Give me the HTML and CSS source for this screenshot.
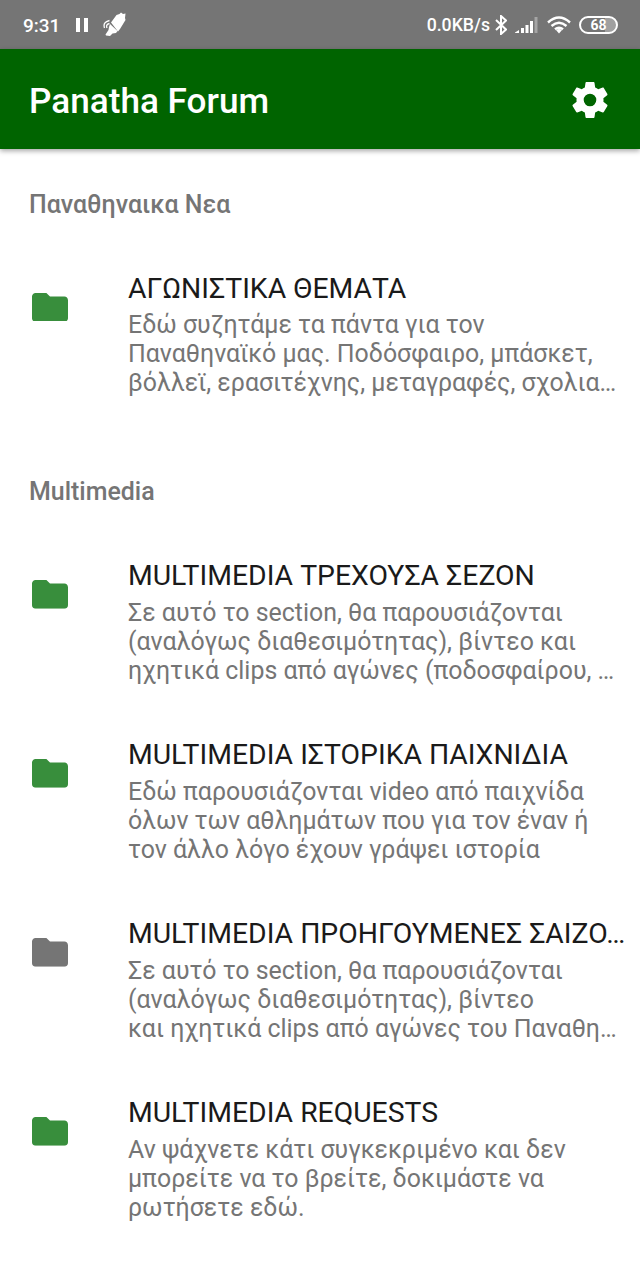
FILE: index.html
```
<!DOCTYPE html>
<html lang="el">
<head>
<meta charset="utf-8">
<title>Panatha Forum</title>
<link rel="stylesheet" href="styles.css">
</head>
<body>
<svg class="defs" aria-hidden="true"><symbol id="folder" viewBox="2 4 20 16"><path d="M10 4H4c-1.100 0-2 .9-2 2v12c0 1.100.9 2 2 2h16c1.100 0 2-.9 2-2V8c0-1.100-.9-2-2-2h-8z"/></symbol></svg>
<header class="status">
  <span class="clock">9:31</span>
  <svg class="pause" viewBox="0 0 12 14"><path d="M0 0h4v14H0zM8 0h4v14H8z"/></svg>
  <svg class="rocket" viewBox="0 0 24 26"><path d="M8 10.500L13.500 3l3-1L18 .5 20 2l2.500-.5-.5 4.500.5 2-5.500 9-2 2.500zM7 12l7.500 7-1.500 2-3.500.5L7 24l-4-.5-.5-1L5.500 18l.5-3z"/><path class="line thin" d="M1.500 16q-2-6 5-7.500M4 16q-1.500-3.500 2.500-4.500"/></svg>
  <span class="speed">0.0KB/s</span>
  <svg class="bluetooth" viewBox="0 0 12 20"><path class="line" d="M1 5l10 9.500L6 19V1l5 4.500L1 15"/></svg>
  <svg class="signal" viewBox="0 0 24 17"><path d="M0 16.500l4-2.500v3H0zM6 12h3v5H6zM10.500 9h3v8h-3zM15 5h3v12h-3z"/><path class="dim" d="M19.500 1h3v16h-3z"/></svg>
  <svg class="wifi" viewBox="0 0 24 18"><path class="line bold" d="M1 6.500Q12-3.500 23 6.500M4.500 10Q12 3.500 19.500 10M8 13.300Q12 10 16 13.300"/><path d="M9 14q3-2 6 0l-3 3.500z"/></svg>
  <span class="battery">68</span>
</header>
<div class="appbar">
  <h1 class="title">Panatha Forum</h1>
  <svg class="gear" viewBox="2 2 20 20"><path d="M19.430 12.980c.04-.32.070-.64.070-.98s-.03-.66-.07-.98l2.110-1.650c.19-.15.240-.42.120-.64l-2-3.460c-.12-.22-.39-.3-.61-.22l-2.490 1c-.52-.4-1.080-.73-1.690-.98l-.38-2.650C14.460 2.180 14.250 2 14 2h-4c-.25 0-.46.180-.49.420l-.38 2.650c-.61.250-1.170.59-1.690.98l-2.490-1c-.23-.09-.49 0-.61.220l-2 3.460c-.13.220-.07.490.12.640l2.110 1.650c-.04.320-.07.650-.07.980s.03.660.070.980l-2.110 1.650c-.19.150-.24.420-.12.640l2 3.460c.12.220.39.300.61.220l2.490-1c.52.400 1.080.730 1.690.980l.38 2.650c.03.240.240.420.490.420h4c.25 0 .46-.18.490-.42l.38-2.650c.61-.25 1.170-.59 1.690-.98l2.490 1c.23.090.490 0 .61-.22l2-3.460c.12-.22.070-.49-.12-.64zM12 15.500A3.500 3.500 0 1 1 12 8.500a3.500 3.500 0 0 1 0 7z"/></svg>
</div>
<main>
  <section class="category">
    <h2 class="heading">Παναθηναικα Νεα</h2>
    <article class="forum">
      <svg class="folder"><use href="#folder"/></svg>
      <div class="text"><h3 class="name">ΑΓΩΝΙΣΤΙΚΑ ΘΕΜΑΤΑ</h3>
      <p class="desc">Εδώ συζητάμε τα πάντα για τον<br>Παναθηναϊκό μας. Ποδόσφαιρο, μπάσκετ,<br>βόλλεϊ, ερασιτέχνης, μεταγραφές, σχολια…</p></div>
    </article>
  </section>
  <section class="category later">
    <h2 class="heading">Multimedia</h2>
    <article class="forum">
      <svg class="folder"><use href="#folder"/></svg>
      <div class="text"><h3 class="name">MULTIMEDIA ΤΡΕΧΟΥΣΑ ΣΕΖΟΝ</h3>
      <p class="desc">Σε αυτό το section, θα παρουσιάζονται<br>(αναλόγως διαθεσιμότητας), βίντεο και<br>ηχητικά clips από αγώνες (ποδοσφαίρου, …</p></div>
    </article>
    <article class="forum">
      <svg class="folder"><use href="#folder"/></svg>
      <div class="text"><h3 class="name">MULTIMEDIA ΙΣΤΟΡΙΚΑ ΠΑΙΧΝΙΔΙΑ</h3>
      <p class="desc">Εδώ παρουσιάζονται video από παιχνίδα<br>όλων των αθλημάτων που για τον έναν ή<br>τον άλλο λόγο έχουν γράψει ιστορία</p></div>
    </article>
    <article class="forum">
      <svg class="folder read"><use href="#folder"/></svg>
      <div class="text"><h3 class="name">MULTIMEDIA ΠΡΟΗΓΟΥΜΕΝΕΣ ΣΑΙΖΟ…</h3>
      <p class="desc">Σε αυτό το section, θα παρουσιάζονται<br>(αναλόγως διαθεσιμότητας), βίντεο<br>και ηχητικά clips από αγώνες του Παναθη…</p></div>
    </article>
    <article class="forum">
      <svg class="folder"><use href="#folder"/></svg>
      <div class="text"><h3 class="name">MULTIMEDIA REQUESTS</h3>
      <p class="desc">Αν ψάχνετε κάτι συγκεκριμένο και δεν<br>μπορείτε να το βρείτε, δοκιμάστε να<br>ρωτήσετε εδώ.</p></div>
    </article>
  </section>
</main>
</body>
</html>
```
FILE: styles.css
```
* { box-sizing: border-box; }
body { margin: 0; height: 1280px; overflow: hidden; background: #fff; font-family: Roboto, "Noto Sans", sans-serif; }
h1, h2, h3, p { margin: 0; white-space: nowrap; }
svg { display: block; flex: none; }
.defs { position: absolute; width: 0; height: 0; }
.status { display: flex; align-items: center; height: 49px; padding: 0 22px 0 23px; background: #757575; color: #fff; fill: #fff; font-size: 19px; font-weight: 500; }
.line { fill: none; stroke: #fff; stroke-width: 2; }
.thin { stroke-width: 1.300; }
.bold { stroke-width: 2.400; }
.dim { opacity: .35; }
.clock { padding-top: 1px; }
.pause { width: 12px; height: 14px; margin-left: 16px; }
.rocket { width: 24px; height: 26px; margin-left: 15px; }
.speed { margin-left: auto; font-size: 17.700px; padding-top: 1px; }
.bluetooth { width: 12px; height: 20px; margin-left: 5px; }
.signal { width: 24px; height: 17px; margin-left: 8px; }
.wifi { width: 24px; height: 18px; margin-left: 8px; }
.battery { width: 39px; height: 18px; margin-left: 8px; border: 2px solid #fff; border-radius: 9px; background: linear-gradient(90deg, #757575 0 68%, #a0a0a0 68%); font-size: 14px; line-height: 14px; font-weight: 700; text-align: center; }
.appbar { display: flex; align-items: center; justify-content: space-between; height: 100px; padding: 2px 32px 0 29px; background: #006400; box-shadow: 0 2px 5px rgba(0,0,0,.35); color: #fff; }
.title { font-size: 35.150px; line-height: 42px; font-weight: 500; padding-top: 1px; }
.gear { width: 36px; height: 36px; fill: #fff; }
.heading { height: 93px; padding: 41px 0 0 29px; color: #757575; font-size: 24.950px; line-height: 30px; font-weight: 500; }
.later { padding-top: 15.400px; }
.forum { display: flex; height: 179px; padding: 29px 0 0 32px; }
.folder { width: 36px; height: 28.800px; margin: 21.500px 60px 0 0; fill: #388e3c; }
.read { fill: #757575; }
.name { color: #1a1a1a; font-size: 28.350px; line-height: 34px; font-weight: 400; padding-top: .7px; }
.desc { color: #757575; font-size: 24.920px; line-height: 29px; font-weight: 400; padding-top: 4.700px; }
```
